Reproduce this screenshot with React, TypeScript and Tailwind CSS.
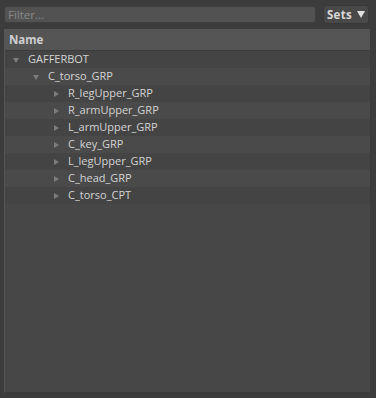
import { ReactNode } from 'react';

type Row = { name: string; depth: number; open: boolean };

const rows: Row[] = [
  { name: 'GAFFERBOT', depth: 0, open: true },
  { name: 'C_torso_GRP', depth: 1, open: true },
  { name: 'R_legUpper_GRP', depth: 2, open: false },
  { name: 'R_armUpper_GRP', depth: 2, open: false },
  { name: 'L_armUpper_GRP', depth: 2, open: false },
  { name: 'C_key_GRP', depth: 2, open: false },
  { name: 'L_legUpper_GRP', depth: 2, open: false },
  { name: 'C_head_GRP', depth: 2, open: false },
  { name: 'C_torso_CPT', depth: 2, open: false },
];

const indents = ['pl-[7px]', 'pl-[27px]', 'pl-[47px]'];

function Arrow({ open }: { open: boolean }): ReactNode {
  return open ? (
    <svg width="8" height="8" viewBox="0 0 8 8" className="shrink-0">
      <path d="M1 2 L7 2 L4 7 Z" fill="#7c7c7c" />
    </svg>
  ) : (
    <svg width="8" height="8" viewBox="0 0 8 8" className="shrink-0">
      <path d="M2 1 L7 4 L2 7 Z" fill="#7c7c7c" />
    </svg>
  );
}

export default function App() {
  return (
    <div className="w-[376px] h-[398px] bg-[#3c3c3c] px-[4px] pt-[5px] pb-[5px] flex flex-col font-['Open_Sans',sans-serif] text-[11px]">
      {/* Filter bar */}
      <div className="flex items-center gap-[7px]">
        <div className="w-[312px] h-[17px] rounded-[3px] bg-[#525252] border border-[#3f3f3f] flex items-center px-[3px] text-[#8a8a8a] text-[11.5px]">
          Filter...
        </div>
        <div className="w-[46px] h-[19px] rounded-[3px] bg-[#494949] border border-[#383838] flex items-center justify-center gap-[5px] font-bold text-[#d8d8d8] text-[11.5px] tracking-[0.3px]">
          Sets
          <svg width="8" height="7" viewBox="0 0 8 7">
            <path d="M0 0 L8 0 L4 7 Z" fill="#e0e0e0" />
          </svg>
        </div>
      </div>

      {/* Tree */}
      <div className="mt-[5px] w-[367px] flex-1 bg-[#474747] border-l border-l-[#555] border-r border-r-[#3a3a3a] border-b border-b-[#3a3a3a] flex flex-col">
        <div className="h-[22px] bg-[#555555] border-b border-[#3b3b3b] flex items-center pl-[4px] font-bold text-[#cfcfcf] text-[11.5px]">
          Name
        </div>
        {rows.map((r, i) => (
          <div
            key={r.name}
            className={`h-[17px] flex items-center gap-[8px] text-[#d4d4d4] ${indents[r.depth]} ${
              i % 2 === 0 ? 'bg-[#444444]' : 'bg-[#4a4a4a]'
            }`}
          >
            <Arrow open={r.open} />
            <span>{r.name}</span>
          </div>
        ))}
      </div>
    </div>
  );
}
